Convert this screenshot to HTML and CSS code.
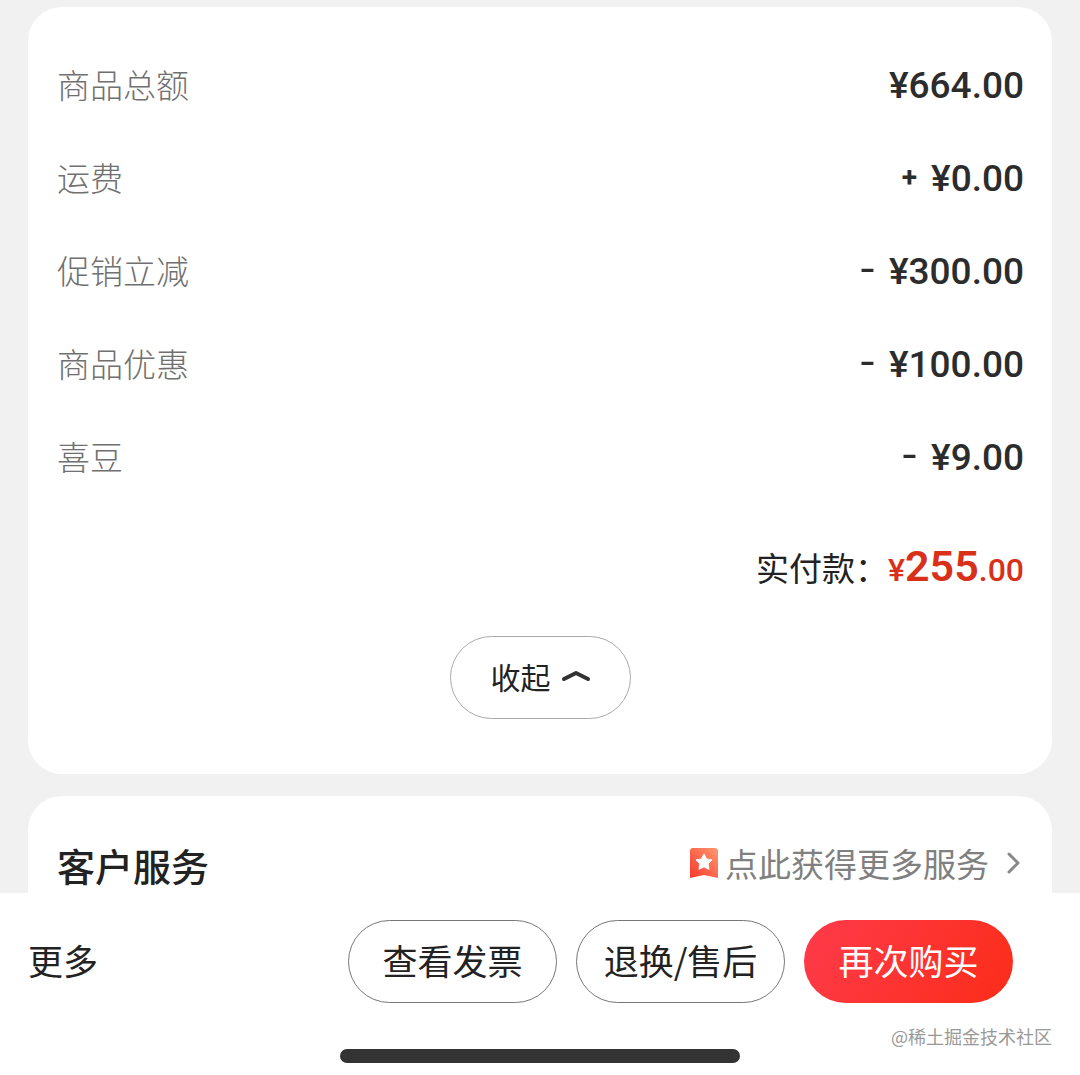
FILE: index.html
```html
<!DOCTYPE html>
<html lang="zh-CN">
<head>
	<meta charset="UTF-8">
	<meta name="viewport" content="width=device-width, initial-scale=1.0">
	<link rel="stylesheet" href="styles.css">
	<title>订单详情</title>
</head>
<body>
	<main class="content">
		<section class="card">
			<dl class="bill">
				<div class="row"><dt>商品总额</dt><dd>¥664.00</dd></div>
				<div class="row"><dt>运费</dt><dd><span class="sign">+</span>¥0.00</dd></div>
				<div class="row"><dt>促销立减</dt><dd><span class="sign">−</span>¥300.00</dd></div>
				<div class="row"><dt>商品优惠</dt><dd><span class="sign">−</span>¥100.00</dd></div>
				<div class="row"><dt>喜豆</dt><dd><span class="sign">−</span>¥9.00</dd></div>
			</dl>
			<p class="total">实付款：<span class="price">¥<b>255</b>.00</span></p>
			<button type="button" class="btn fold">收起
				<svg width="30" height="14" viewBox="0 0 30 14"><path d="M3 10L15 4L27 10" fill="none" stroke="#333" stroke-width="4" stroke-linecap="round" stroke-linejoin="round"/></svg>
			</button>
		</section>
		<section class="card service">
			<h2>客户服务</h2>
			<a href="#" class="more-service">
				<svg class="badge" width="28" height="32" viewBox="0 0 28 32">
					<defs>
						<linearGradient id="g" x1="0" y1="1" x2="1" y2="0">
							<stop offset="0" stop-color="#f8382c"/>
							<stop offset="1" stop-color="#ff9a70"/>
						</linearGradient>
					</defs>
					<path d="M3 1H25Q28 1 28 4V31L14 28L0 31V4Q0 1 3 1Z" fill="url(#g)"/>
					<path d="M14 7L16.600 12L22 12.900L18.200 16.800L19 22.300L14 19.900L9 22.300L9.800 16.800L6 12.900L11.400 12Z" fill="#fff" stroke="#fff" stroke-width="1" stroke-linejoin="round"/>
				</svg>
				<span>点此获得更多服务</span>
				<svg class="arrow" width="14" height="22" viewBox="0 0 14 22"><path d="M2 2L11 11L2 20" fill="none" stroke="#888" stroke-width="3" stroke-linecap="round" stroke-linejoin="round"/></svg>
			</a>
		</section>
	</main>
	<footer class="bar">
		<div class="actions">
			<button type="button" class="more">更多</button>
			<button type="button" class="btn">查看发票</button>
			<button type="button" class="btn">退换/售后</button>
			<button type="button" class="btn buy">再次购买</button>
		</div>
		<div class="home"></div>
		<span class="mark">@稀土掘金技术社区</span>
	</footer>
</body>
</html>
```
FILE: styles.css
```css
*{
	box-sizing:border-box;
	margin:0;
	padding:0;
}
body{
	display:flex;
	flex-direction:column;
	height:100vh;
	background:#f1f1f1;
	color:#222;
	font-family:"Noto Sans CJK SC", sans-serif;
}
button{
	background:none;
	border:none;
	color:inherit;
	font-family:inherit;
	padding-bottom:4px;
}
.content{
	flex:1;
	min-height:0;
	overflow:hidden;
	padding:7px 28px 0;
}
.card{
	background:#fff;
	border-radius:34px;
	padding:31px 28px 55px 29px;
	margin-bottom:22px;
}
.row{
	display:flex;
	justify-content:space-between;
	align-items:baseline;
	height:93px;
	line-height:93px;
}
.row dt{
	color:#707070;
	font-size:33px;
	font-weight:300;
}
.row dd{
	color:#2c2c2c;
	font:500 37px/92px Roboto, sans-serif;
}
.sign{
	font-size:28px;
	font-weight:700;
	line-height:28px;
	vertical-align:4px;
	margin-right:14px;
}
.total{
	text-align:right;
	font-size:33px;
	line-height:64px;
	margin:31px 0 34px;
}
.price{
	color:#d9301a;
	font-family:Roboto, sans-serif;
	font-size:32px;
	font-weight:500;
}
.price b{
	font-size:43px;
	font-weight:600;
}
.btn{
	width:209px;
	height:83px;
	border:1px solid #777;
	border-radius:42px;
	font-size:35px;
}
.fold{
	display:flex;
	align-items:center;
	justify-content:center;
	gap:10px;
	width:181px;
	margin:0 auto;
	border-color:#aaa;
	font-size:30px;
}
.service{
	display:flex;
	justify-content:space-between;
	align-items:flex-start;
	padding-top:42px;
}
.service h2{
	font-size:38px;
	font-weight:500;
	line-height:54px;
}
.more-service{
	display:flex;
	align-items:center;
	gap:7px;
	color:#808080;
	font-size:33px;
	line-height:50px;
	text-decoration:none;
}
.arrow{
	margin:0 3px 0 11px;
}
.bar{
	position:relative;
	background:#fff;
	padding:27px 28px 12px;
}
.actions{
	display:flex;
	align-items:center;
	gap:19px;
	padding-right:39px;
}
.more{
	margin-right:auto;
	font-size:35px;
}
.buy{
	border:none;
	background:linear-gradient(120deg, #ff3b4b, #fb2c18);
	color:#fff;
}
.home{
	width:39%;
	height:14px;
	margin:46px auto 0;
	border-radius:7px;
	background:#333;
}
.mark{
	position:absolute;
	right:28px;
	bottom:26px;
	color:#999;
	font-size:18px;
}
```
